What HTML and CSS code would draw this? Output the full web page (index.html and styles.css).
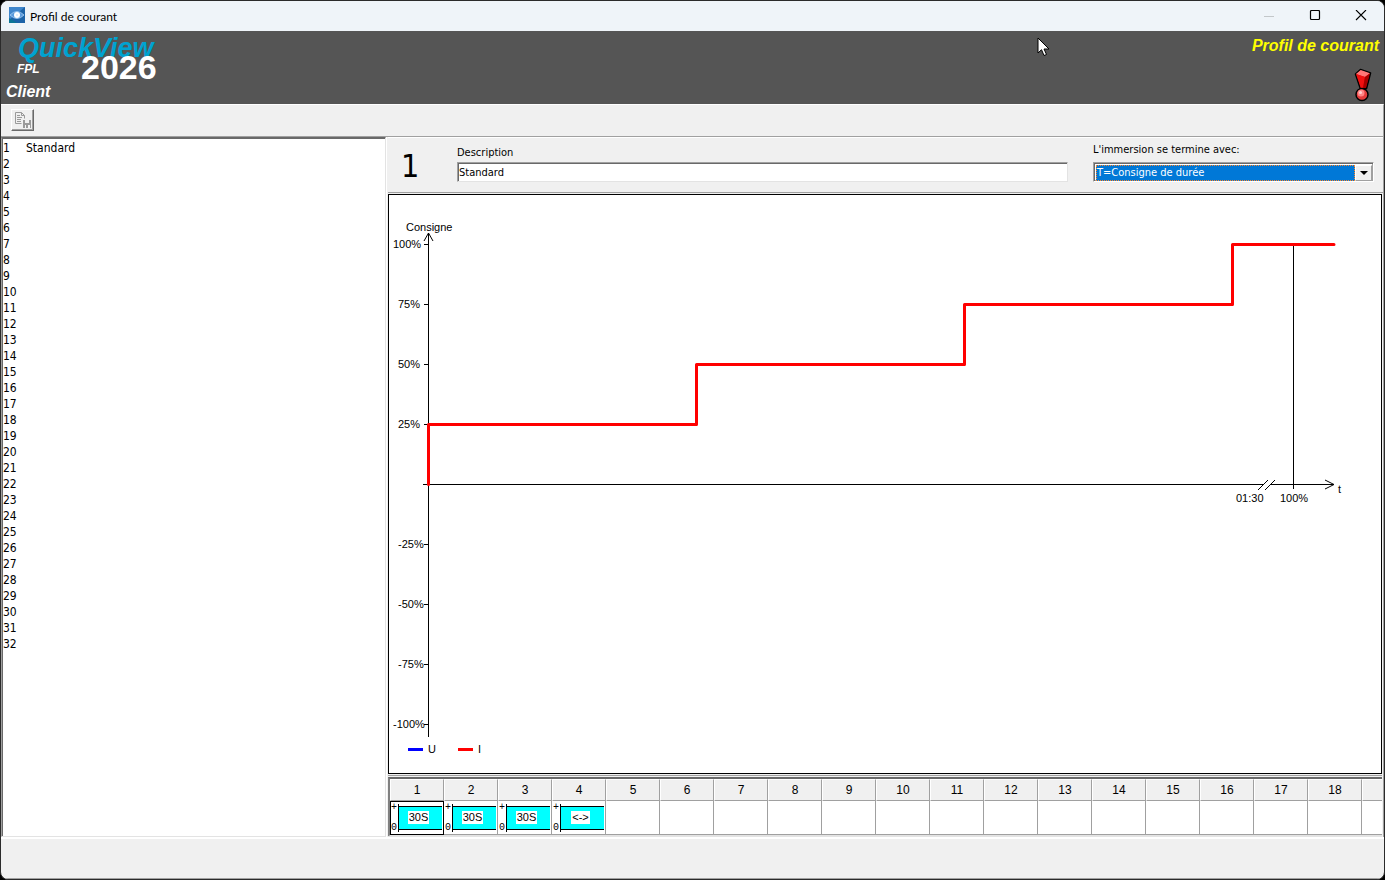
FILE: index.html
```html
<!DOCTYPE html>
<html lang="fr">
<head>
    <meta charset="UTF-8">
    <meta name="viewport" content="width=device-width, initial-scale=1.0">
    <title>Profil de courant</title>
    <link rel="stylesheet" href="styles.css">
</head>
<body>
    <div class="window">
        <div class="titlebar">
            <svg class="app-icon" width="16" height="16" viewBox="0 0 16 16">
                <rect width="16" height="16" fill="#1c63a8"/>
                <path d="M0 0h16L0 13z" fill="#3f86cc"/>
                <path d="M0 16V11l8 5z" fill="#0c7696"/>
                <path d="M1 8Q8 1 15 8Q8 15 1 8z" fill="#5b9bdc" stroke="#a9d0f5" stroke-width="0.800"/>
                <circle cx="8" cy="8" r="3" fill="#fff"/>
                <circle cx="8" cy="8" r="1" fill="#d8ecfa"/>
            </svg>
            <span class="window-title">Profil de courant</span>
            <div class="window-buttons">
                <button type="button" aria-label="Réduire" disabled>
                    <svg width="12" height="12" viewBox="0 0 12 12"><path d="M1 6.500h10" stroke="#c3c7ca"/></svg>
                </button>
                <button type="button" aria-label="Agrandir">
                    <svg width="12" height="12" viewBox="0 0 12 12"><rect x="1.500" y="0.500" width="9" height="9" rx="1" fill="none" stroke="#000" stroke-width="1.200"/></svg>
                </button>
                <button type="button" aria-label="Fermer">
                    <svg width="12" height="12" viewBox="0 0 12 12"><path d="M1 0l10 10M11 0L1 10" stroke="#000" stroke-width="1.100"/></svg>
                </button>
            </div>
        </div>

        <header class="header">
            <div class="brand">
                <div class="brand-name">QuickView</div>
                <div class="brand-row">
                    <span class="brand-edition">FPL</span>
                    <span class="brand-year">2026</span>
                </div>
                <div class="client">Client</div>
            </div>
            <div class="header-right">
                <h1 class="page-title">Profil de courant</h1>
                <svg class="alarm-icon" width="18" height="34" viewBox="0 0 18 34">
                    <path d="M1.500 6L6.500 1.500L16.500 5L12.500 20.500L6.500 21z" fill="#e00000" stroke="#000" stroke-width="1.600" stroke-linejoin="round"/>
                    <path d="M2 6L6.700 2L16 5.300L11 9z" fill="#ff7777"/>
                    <path d="M2 6L11 9L9 20H6.800z" fill="#f01010"/>
                    <path d="M11 9L16 5.300L12 20H9z" fill="#a80000"/>
                    <circle cx="8" cy="26.500" r="6" fill="#e43c3c" stroke="#000" stroke-width="1.500"/>
                    <circle cx="7" cy="25" r="3.500" fill="#ff8585"/>
                    <circle cx="6.500" cy="24.500" r="1.500" fill="#ffd0d0"/>
                </svg>
            </div>
            <svg class="cursor" width="14" height="20" viewBox="0 0 14 20">
                <path d="M1 1v15l3.500-3.300L7 18.500l2.500-1L7 12h5z" fill="#fff" stroke="#000" stroke-width="1"/>
            </svg>
        </header>

        <div class="toolbar">
            <button type="button" class="tool-btn" aria-label="Enregistrer">
                <svg width="18" height="18" viewBox="0 0 18 18">
                    <path d="M1.500 1.500h6l3 3v3M1.500 1.500v11h6M7.500 1.500v3h3" fill="none" stroke="#9a9a9a"/>
                    <path d="M3 4.500h3M3 6.500h5M3 8.500h4M3 10.500h4" stroke="#9a9a9a"/>
                    <path d="M9 9h2v3h4V9h2v8H9z" fill="#9a9a9a"/>
                    <path d="M11 14h5v3h-5z" fill="#f4f4f4"/>
                    <path d="M12 14h2v3h-2z" fill="#9a9a9a"/>
                </svg>
            </button>
        </div>

        <main class="main">
            <ul class="profile-list" id="profileList"></ul>

            <section class="editor">
                <form class="profile-form">
                    <div class="profile-number">1</div>
                    <div class="form-group description">
                        <label for="description">Description</label>
                        <input type="text" id="description" name="description" value="Standard">
                    </div>
                    <div class="form-group ending">
                        <label for="ending">L'immersion se termine avec:</label>
                        <div class="select-box">
                            <select id="ending" name="ending">
                                <option>T=Consigne de durée</option>
                            </select>
                            <span class="select-arrow"></span>
                        </div>
                    </div>
                </form>

                <div class="chart-frame">
                    <svg class="chart" viewBox="0 0 992 578" preserveAspectRatio="xMinYMin meet">
                        <g class="axis">
                            <path d="M39.500 542V38M35 46l4.500-8l4.500 8"/>
                            <path d="M34 289.500h841M882 289.500h63M936 285l9 4.500l-9 4.500"/>
                            <path d="M869 295l10-10M876 295l10-10"/>
                            <path d="M904.500 49v245"/>
                            <path d="M35 49.500h4M35 109.500h4M35 169.500h4M35 229.500h4M35 349.500h4M35 409.500h4M35 469.500h4M35 529.500h4"/>
                        </g>
                        <path class="curve" d="M39.500 289.500V229.500H307.500V169.500H575.500V109.500H843.500V49.500H945"/>
                        <g class="chart-text">
                            <text x="17" y="36">Consigne</text>
                            <text x="4" y="53">100%</text>
                            <text x="9" y="113">75%</text>
                            <text x="9" y="173">50%</text>
                            <text x="9" y="233">25%</text>
                            <text x="9" y="353">-25%</text>
                            <text x="9" y="413">-50%</text>
                            <text x="9" y="473">-75%</text>
                            <text x="4" y="533">-100%</text>
                            <text x="847" y="307">01:30</text>
                            <text x="891" y="307">100%</text>
                            <text x="949" y="298">t</text>
                            <text x="39" y="558">U</text>
                            <text x="89" y="558">I</text>
                        </g>
                        <rect x="19" y="553" width="15" height="3" fill="#0000ff"/>
                        <rect x="69" y="553" width="15" height="3" fill="#ff0000"/>
                    </svg>
                </div>

                <div class="steps">
                    <table class="steps-table">
                        <thead><tr id="stepHeads"></tr></thead>
                        <tbody><tr id="stepCells"></tr></tbody>
                    </table>
                </div>
            </section>
        </main>

        <footer class="statusbar"></footer>
    </div>

    <script src="script.js"></script>
</body>
</html>
```

FILE: styles.css
```css
* {
    margin: 0;
    padding: 0;
    box-sizing: border-box;
}

body {
    background: #000;
    font-family: 'DejaVu Sans Condensed', 'DejaVu Sans', Tahoma, sans-serif;
    font-size: 11px;
    color: #000;
}

button,
input,
select {
    font: inherit;
    color: inherit;
}

.window {
    display: flex;
    flex-direction: column;
    min-height: 100vh;
    border: 1px solid #2b2b2b;
    border-radius: 8px;
    background: #f0f0f0;
    overflow: hidden;
}

/* Title bar */
.titlebar {
    display: flex;
    align-items: center;
    height: 30px;
    padding-left: 8px;
    background: #eff4f9;
}

.app-icon {
    margin-bottom: 2px;
}

.window-title {
    flex: 1;
    margin-left: 5px;
    font-family: Lato, 'Segoe UI', sans-serif;
    font-size: 12px;
}

.window-buttons {
    display: flex;
}

.window-buttons button {
    display: flex;
    align-items: center;
    justify-content: center;
    width: 46px;
    height: 30px;
    border: none;
    background: none;
}

/* Header */
.header {
    position: relative;
    display: flex;
    justify-content: space-between;
    padding: 6px 5px 2px 5px;
    background: #555;
    color: #fff;
    font-family: 'Liberation Sans', Arial, sans-serif;
    font-weight: bold;
    font-style: italic;
}

.brand-name {
    padding-left: 12px;
    font-size: 27px;
    line-height: 22px;
    color: #00a2d0;
}

.brand-row {
    display: flex;
    height: 23px;
    padding-left: 11px;
}

.brand-edition {
    width: 64px;
    font-size: 12px;
    line-height: 20px;
}

.brand-year {
    font-size: 34px;
    font-style: normal;
    line-height: 16px;
}

.client {
    font-size: 16px;
    line-height: 20px;
}

.header-right {
    display: flex;
    flex-direction: column;
    align-items: flex-end;
    justify-content: space-between;
}

.page-title {
    font-size: 16px;
    line-height: 18px;
    color: #ff0;
}

.alarm-icon {
    margin-right: 7px;
}

.cursor {
    position: absolute;
    left: 1036px;
    top: 6px;
}

/* Toolbar */
.toolbar {
    height: 33px;
    padding: 4px 10px;
    border-top: 1px solid #fff;
    border-right: 1px solid #a0a0a0;
    border-bottom: 1px solid #a0a0a0;
}

.tool-btn {
    display: flex;
    align-items: center;
    justify-content: center;
    width: 23px;
    height: 22px;
    border: 1px solid;
    border-color: #fff #696969 #696969 #fff;
    box-shadow: inset -1px -1px #a0a0a0;
    background: #f0f0f0;
}

.tool-btn svg {
    flex: none;
}

/* Main area */
.main {
    display: flex;
    flex: 1;
}

.profile-list {
    width: 385px;
    padding: 2px 0 0 1px;
    border: 1px solid;
    border-color: #696969 #e3e3e3 #e3e3e3 #a0a0a0;
    box-shadow: inset 1px 1px #696969;
    background: #fff;
    list-style: none;
    font-size: 12px;
    line-height: 16px;
}

.profile-list li {
    display: flex;
}

.profile-list .number {
    width: 23px;
}

.editor {
    display: flex;
    flex: 1;
    flex-direction: column;
    min-width: 0;
    padding-left: 1px;
    border-left: 1px solid #fff;
    border-right: 1px solid #a0a0a0;
}

.profile-form {
    display: flex;
    align-items: flex-start;
    height: 56px;
    padding: 0 9px 0 13px;
    border-top: 1px solid #fff;
    border-bottom: 1px solid #a0a0a0;
}

.profile-number {
    width: 56px;
    font-size: 32px;
    line-height: 56px;
}

.form-group label {
    display: block;
    line-height: 14px;
}

.description {
    flex: 1;
    padding-top: 8px;
    margin-right: 25px;
}

.description input {
    display: block;
    width: 100%;
    height: 20px;
    margin-top: 2px;
    padding: 0 1px;
    border: 1px solid;
    border-color: #a0a0a0 #e3e3e3 #e3e3e3 #a0a0a0;
    box-shadow: inset 1px 1px #696969;
    background: #fff;
}

.ending {
    width: 281px;
    padding-top: 5px;
}

.select-box {
    display: flex;
    height: 20px;
    margin-top: 5px;
    padding: 2px 1px 1px 2px;
    border: 1px solid;
    border-color: #a0a0a0 #fff #fff #a0a0a0;
    box-shadow: inset 1px 1px #696969, inset -1px -1px #a0a0a0;
    background: #fff;
}

.select-box select {
    flex: 1;
    height: 16px;
    appearance: none;
    border: 1px dotted #ff8728;
    border-radius: 0;
    outline: none;
    background: #0078d7;
    color: #fff;
    line-height: 14px;
}

.select-arrow {
    display: flex;
    align-items: center;
    justify-content: center;
    width: 17px;
    height: 16px;
    border: 1px solid;
    border-color: #fff #a0a0a0 #a0a0a0 #fff;
    background: #f0f0f0;
    pointer-events: none;
}

.select-arrow::after {
    content: "";
    border: 4px solid transparent;
    border-top-color: #000;
    border-bottom: none;
}

/* Chart */
.chart-frame {
    flex: 1;
    margin: 1px 1px 1px 0;
    border: 1px solid #000;
    background: #fff;
}

.chart {
    display: block;
    width: 100%;
}

.axis {
    fill: none;
    stroke: #000;
    stroke-width: 1;
}

.curve {
    fill: none;
    stroke: #f00;
    stroke-width: 3;
    stroke-linejoin: round;
    stroke-linecap: round;
}

.chart-text {
    font-family: 'Liberation Sans', Arial, sans-serif;
    font-size: 11px;
}

/* Step grid */
.steps {
    height: 62px;
    margin-right: 1px;
    padding-top: 1px;
    border-top: 1px solid #a0a0a0;
    border-bottom: 1px solid #e3e3e3;
    overflow: hidden;
}

.steps-table {
    width: 1030px;
    border: 2px solid;
    border-color: #696969 #e3e3e3 #e3e3e3 #808080;
    border-spacing: 0;
    table-layout: fixed;
    background: #fff;
    font-family: 'Liberation Sans', Arial, sans-serif;
    font-size: 12px;
}

.steps-table th {
    height: 22px;
    border-top: 1px solid #fff;
    border-left: 1px solid #fff;
    border-right: 1px solid #a0a0a0;
    border-bottom: 1px solid #a0a0a0;
    background: #f0f0f0;
    font-weight: normal;
}

.steps-table td {
    height: 34px;
    border-right: 1px solid #a0a0a0;
    border-bottom: 1px solid #a0a0a0;
}

.steps-table td.selected {
    outline: 1px solid #000;
    outline-offset: -1px;
}

.step {
    display: flex;
    height: 28px;
    margin: 0 1px;
}

.step-scale {
    display: flex;
    flex-direction: column;
    justify-content: space-between;
    width: 8px;
    border-right: 1px solid #000;
    font-family: 'Liberation Mono', monospace;
    font-size: 10px;
    line-height: 8px;
}

.step-bar {
    display: flex;
    flex: 1;
    align-items: center;
    justify-content: center;
    height: 24px;
    margin-top: 2px;
    padding-right: 4px;
    border-top: 1px solid #000;
    border-bottom: 1px solid #000;
    background: #0ff;
}

.step-value {
    padding: 0 1px;
    background: #fff;
    font-size: 11px;
    line-height: 13px;
}

/* Status bar */
.statusbar {
    height: 42px;
    border-top: 2px solid #fff;
    border-bottom: 1px solid #a0a0a0;
}
```

FILE: script.js
```js
const profiles = ['Standard'];
const steps = ['30S', '30S', '30S', '<->'];

// Profile list
const list = document.getElementById('profileList');
for (let i = 1; i <= 32; i++) {
    const item = document.createElement('li');
    const number = document.createElement('span');
    number.className = 'number';
    number.textContent = i;
    const name = document.createElement('span');
    name.textContent = profiles[i - 1] || '';
    item.append(number, name);
    list.appendChild(item);
}

// Step grid, the last column runs out of view
const heads = document.getElementById('stepHeads');
const cells = document.getElementById('stepCells');
for (let i = 1; i <= 19; i++) {
    const head = document.createElement('th');
    head.textContent = i <= 18 ? i : '';
    heads.appendChild(head);

    const cell = document.createElement('td');
    if (i === 1) {
        cell.className = 'selected';
    }
    if (steps[i - 1]) {
        cell.innerHTML = '<div class="step"><div class="step-scale"><span>+</span><span>0</span></div>' +
            '<div class="step-bar"><span class="step-value"></span></div></div>';
        cell.querySelector('.step-value').textContent = steps[i - 1];
    }
    cells.appendChild(cell);
}
```
